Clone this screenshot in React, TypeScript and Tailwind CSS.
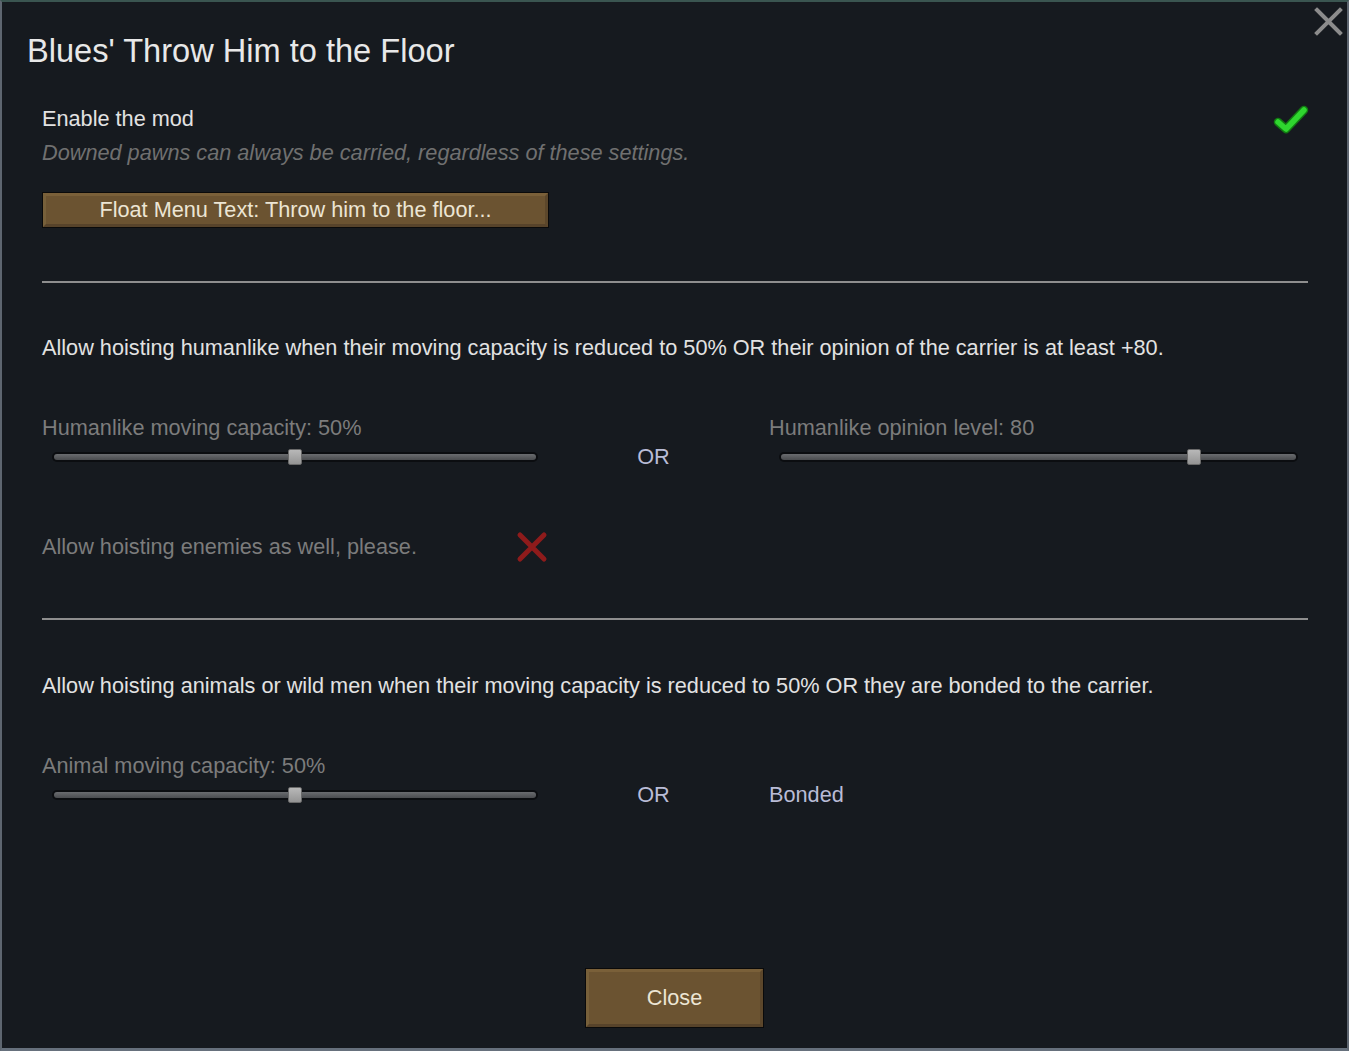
import React from 'react'

function Slider({ value }: { value: number }) {
  return (
    <div className="relative mx-[10px] h-[30px] flex items-center">
      <div className="w-full h-[10px] rounded-full bg-[#0b0d10] px-[2px] py-[2px]">
        <div className="h-full rounded-full bg-gradient-to-b from-[#6a6c6f] to-[#4a4c4f]" />
      </div>
      <div
        className="absolute top-[7px] w-[14px] h-[16px] -ml-[7px] rounded-[2px] bg-gradient-to-b from-[#b8b8b8] to-[#949494] border border-[#6a6a6a]"
        style={{ left: `${value * 100}%` }}
      />
    </div>
  )
}

function RimButton({ label, className }: { label: string; className: string }) {
  return (
    <div className={`border border-[#0a0a0a] bg-[#0a0a0a] ${className}`}>
      <div className="h-full w-full flex items-center justify-center bg-[#6b5331] border-t-[3px] border-l-[3px] border-t-[#7a6039] border-l-[#77603a] border-b-[3px] border-r-[3px] border-b-[#57432a] border-r-[#5c472b] text-[#ece5d4] text-[21.7px]">
        {label}
      </div>
    </div>
  )
}

export default function App() {
  return (
    <div
      className="w-full h-[1051px] bg-[#161a1f] border-t-2 border-t-[#3a5550] border-l-2 border-l-[#5e6670] border-r-2 border-r-[#5e6670] border-b-[3px] border-b-[#66707c] flex flex-col relative text-[21.7px]"
      style={{ fontFamily: '"Liberation Sans", Arial, sans-serif' }}
    >
      {/* close X */}
      <svg className="absolute right-[4px] top-[5px]" width="29" height="29" viewBox="0 0 29 29">
        <path d="M3 3 L26 26 M26 3 L3 26" stroke="#8c8c8c" strokeWidth="4" strokeLinecap="square" />
      </svg>

      <div className="flex flex-col pl-[40px] pr-[39px] flex-1">
        <div className="h-[40px] mt-[29px] -ml-[15px] flex items-center text-[32.6px] text-[#e8e8e8]">
          Blues' Throw Him to the Floor
        </div>

        <div className="h-[28px] mt-[34px] flex items-center justify-between">
          <span className="text-[#e2e2e2]">Enable the mod</span>
          <svg width="36" height="32" viewBox="0 0 36 32" className="-mr-[1px]">
            <path d="M5 19 L13 26 L31 7" fill="none" stroke="#127a12" strokeWidth="8.5" strokeLinecap="round" strokeLinejoin="round" />
            <path d="M5 19 L13 26 L31 7" fill="none" stroke="#2fd62f" strokeWidth="5.5" strokeLinecap="round" strokeLinejoin="round" />
          </svg>
        </div>
        <div className="h-[28px] mt-[6px] flex items-center italic text-[#707070]">
          Downed pawns can always be carried, regardless of these settings.
        </div>

        <RimButton label="Float Menu Text: Throw him to the floor..." className="mt-[25px] w-[507px] h-[36px]" />

        <div className="mt-[53px] h-[2px] bg-[#8e8e8e]" />

        <div className="h-[28px] mt-[51px] flex items-center text-[#e2e2e2]">
          Allow hoisting humanlike when their moving capacity is reduced to 50% OR their opinion of the carrier is at least +80.
        </div>

        <div className="mt-[52px] flex">
          <div className="w-[506px] flex flex-col">
            <div className="h-[28px] flex items-center text-[#7c7c7c]">Humanlike moving capacity: 50%</div>
            <Slider value={0.5} />
          </div>
          <div className="w-[211px] flex flex-col">
            <div className="h-[28px]" />
            <div className="h-[30px] flex items-center justify-center text-[#b9bcd6]">OR</div>
          </div>
          <div className="flex-1 ml-[10px] flex flex-col">
            <div className="h-[28px] flex items-center text-[#7c7c7c]">Humanlike opinion level: 80</div>
            <Slider value={0.8} />
          </div>
        </div>

        <div className="mt-[58px] h-[34px] w-[506px] flex items-center justify-between">
          <span className="text-[#7c7c7c]">Allow hoisting enemies as well, please.</span>
          <svg width="34" height="34" viewBox="0 0 34 34" className="-mr-[1px]">
            <path d="M5 5 L29 29 M29 5 L5 29" stroke="#8e1b1b" strokeWidth="5" strokeLinecap="round" />
          </svg>
        </div>

        <div className="mt-[54px] h-[2px] bg-[#8e8e8e]" />

        <div className="h-[28px] mt-[52px] flex items-center text-[#e2e2e2]">
          Allow hoisting animals or wild men when their moving capacity is reduced to 50% OR they are bonded to the carrier.
        </div>

        <div className="mt-[52px] flex">
          <div className="w-[506px] flex flex-col">
            <div className="h-[28px] flex items-center text-[#7c7c7c]">Animal moving capacity: 50%</div>
            <Slider value={0.5} />
          </div>
          <div className="w-[211px] flex flex-col">
            <div className="h-[28px]" />
            <div className="h-[30px] flex items-center justify-center text-[#b9bcd6]">OR</div>
          </div>
          <div className="flex-1 ml-[10px] flex flex-col">
            <div className="h-[28px]" />
            <div className="h-[30px] flex items-center text-[#b9bcd6]">Bonded</div>
          </div>
        </div>
      </div>

      <div className="flex justify-center mb-[20px]">
        <RimButton label="Close" className="w-[179px] h-[60px]" />
      </div>
    </div>
  )
}
